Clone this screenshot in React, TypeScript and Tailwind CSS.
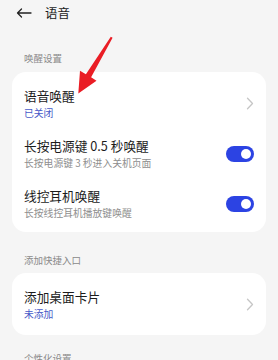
import React from "react";

const font = { fontFamily: '"Noto Sans CJK SC", "Noto Sans", sans-serif' };

function Chevron() {
  return (
    <svg width="8" height="13" viewBox="0 0 8 13" className="shrink-0">
      <path d="M1.5 1.2 L6.5 6.5 L1.5 11.8" fill="none" stroke="#c6c6c6" strokeWidth="1.3" strokeLinecap="round" strokeLinejoin="round" />
    </svg>
  );
}

function Toggle() {
  return (
    <div className="w-[28px] h-[16px] rounded-full bg-[#2c43e3] flex items-center justify-end pr-[3px] shrink-0">
      <div className="w-[10px] h-[10px] rounded-full bg-white" />
    </div>
  );
}

function Row({ title, sub, subBlue, right }: { title: string; sub: string; subBlue?: boolean; right: React.ReactNode }) {
  return (
    <div className="flex items-center justify-between pl-[12px] pr-[12px]">
      <div className="flex flex-col">
        <div className="text-[12.7px] leading-[18px] text-[#1c1c1c]">{title}</div>
        <div className={`text-[9.8px] leading-[14px] mt-[1px] ${subBlue ? "text-[#4759c8]" : "text-[#8e8e8e]"}`}>{sub}</div>
      </div>
      {right}
    </div>
  );
}

export default function App() {
  return (
    <div className="relative w-[278px] h-[360px] overflow-hidden bg-[#f5f5f5]" style={font}>
      <div className="flex items-center h-[26px] pl-[16px]">
        <svg width="16" height="10" viewBox="0 0 16 10">
          <path d="M15 5 H1.5 M5.5 1 L1.5 5 L5.5 9" fill="none" stroke="#222" strokeWidth="1.3" strokeLinecap="round" strokeLinejoin="round" />
        </svg>
        <span className="ml-[13px] text-[12.5px] text-[#1c1c1c]">语音</span>
      </div>

      <div className="text-[9.5px] leading-[14px] text-[#8a8a8a] pl-[24px] mt-[25px]">唤醒设置</div>

      <div className="mx-[12px] mt-[7px] bg-white rounded-[14px] pt-[15px] pb-[12px] flex flex-col gap-[17px]">
        <Row title="语音唤醒" sub="已关闭" subBlue right={<Chevron />} />
        <Row title="长按电源键 0.5 秒唤醒" sub="长按电源键 3 秒进入关机页面" right={<Toggle />} />
        <Row title="线控耳机唤醒" sub="长按线控耳机播放键唤醒" right={<Toggle />} />
      </div>

      <div className="text-[9.5px] leading-[14px] text-[#8a8a8a] pl-[24px] mt-[21px]">添加快捷入口</div>

      <div className="mx-[12px] mt-[6px] bg-white rounded-[14px] pt-[15px] pb-[14px] flex flex-col">
        <Row title="添加桌面卡片" sub="未添加" subBlue right={<Chevron />} />
      </div>

      <div className="text-[9.5px] leading-[14px] text-[#8a8a8a] pl-[24px] mt-[16px]">个性化设置</div>

      <svg className="absolute left-0 top-0 pointer-events-none" width="278" height="360" viewBox="0 0 278 360">
        <polygon
          points="110.8,36.8 112.6,37.8 91.1,77.2 96.5,80.7 78.3,93.5 80,70.8 85.9,74.2"
          fill="#ea1d25"
        />
      </svg>
    </div>
  );
}
